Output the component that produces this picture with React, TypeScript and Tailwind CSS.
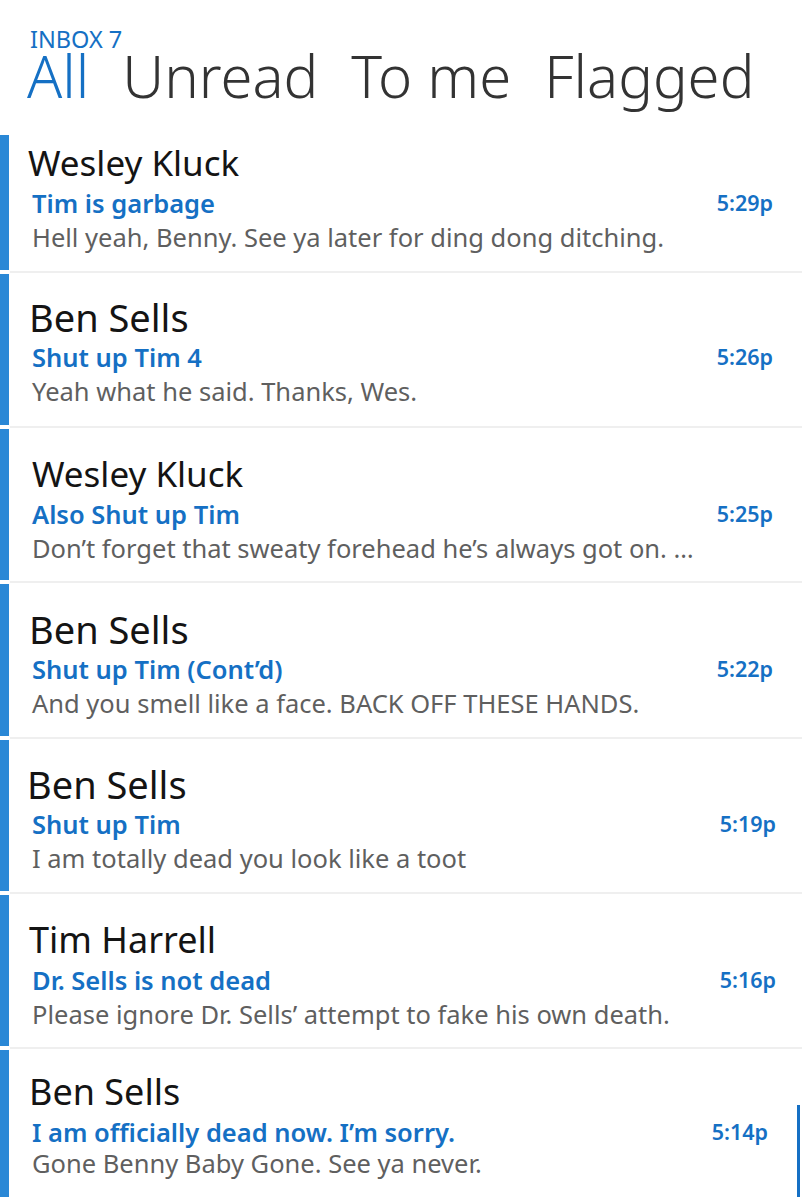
import React from "react";

type Mail = {
  name: string;
  subject: string;
  preview: string;
  time: string;
  h: string;
  pt: string;
  ns: string;
  pr: string;
  pm: string;
};

const mails: Mail[] = [
  { name: "Wesley Kluck", subject: "Tim is garbage", preview: "Hell yeah, Benny. See ya later for ding dong ditching.", time: "5:29p", h: "h-[135px]", pt: "pt-[8px]", ns: "text-[35px] -ml-[4px]", pr: "pr-[29px]", pm: "mt-0" },
  { name: "Ben Sells", subject: "Shut up Tim 4", preview: "Yeah what he said. Thanks, Wes.", time: "5:26p", h: "h-[151px]", pt: "pt-[23px]", ns: "text-[38px] -ml-[3px]", pr: "pr-[29px]", pm: "mt-0" },
  { name: "Wesley Kluck", subject: "Also Shut up Tim", preview: "Don\u2019t forget that sweaty forehead he\u2019s always got on. \u2026", time: "5:25p", h: "h-[151px]", pt: "pt-[25px]", ns: "text-[35px] ml-0", pr: "pr-[29px]", pm: "mt-0" },
  { name: "Ben Sells", subject: "Shut up Tim (Cont\u2019d)", preview: "And you smell like a face. BACK OFF THESE HANDS.", time: "5:22p", h: "h-[152px]", pt: "pt-[25px]", ns: "text-[38px] -ml-[3px]", pr: "pr-[29px]", pm: "mt-0" },
  { name: "Ben Sells", subject: "Shut up Tim", preview: "I am totally dead you look like a toot", time: "5:19p", h: "h-[151px]", pt: "pt-[24px]", ns: "text-[38px] -ml-[5px]", pr: "pr-[26px]", pm: "mt-0" },
  { name: "Tim Harrell", subject: "Dr. Sells is not dead", preview: "Please ignore Dr. Sells\u2019 attempt to fake his own death.", time: "5:16p", h: "h-[151px]", pt: "pt-[25px]", ns: "text-[36px] -ml-[3px]", pr: "pr-[26px]", pm: "mt-0" },
  { name: "Ben Sells", subject: "I am officially dead now. I\u2019m sorry.", preview: "Gone Benny Baby Gone. See ya never.", time: "5:14p", h: "h-[147px]", pt: "pt-[22px]", ns: "text-[36px] -ml-[3px]", pr: "pr-[34px]", pm: "-mt-[3px]" },
];

function Row({ m, last }: { m: Mail; last: boolean }) {
  return (
    <div className={`relative flex ${m.h}`}>
      <div className="w-[9px] shrink-0 bg-[#2a88d6]" />
      <div className={`flex-1 pl-[23px] ${m.pr} ${m.pt}`}>
        <div className={`leading-[40px] text-[#141414] whitespace-nowrap ${m.ns}`}>{m.name}</div>
        <div className="mt-[3px] flex items-center justify-between">
          <div className="text-[25.5px] leading-[34px] font-semibold text-[#1570c4] whitespace-nowrap">{m.subject}</div>
          <div className="text-[21.5px] leading-[34px] font-semibold text-[#1570c4]">{m.time}</div>
        </div>
        <div className={`text-[25.5px] leading-[34px] text-[#5f5f5f] whitespace-nowrap ${m.pm}`}>{m.preview}</div>
      </div>
      {last && <div className="absolute right-[2px] top-[55px] bottom-0 w-[3px] bg-[#1570c4]" />}
    </div>
  );
}

export default function App() {
  return (
    <div className="w-[802px] h-[1200px] overflow-hidden bg-white" style={{ fontFamily: '"Noto Sans", "Open Sans", sans-serif' }}>
      <div className="h-[135px] pl-[30px] pt-[27px]">
        <div className="text-[23.5px] leading-[24px] text-[#1570c4]">INBOX 7</div>
        <div className="-mt-[3px] -ml-[3px] flex gap-[33px] text-[58px] leading-[56px] font-light text-[#333333]">
          <span className="text-[#1570c4]">All</span>
          <span>Unread</span>
          <span>To me</span>
          <span>Flagged</span>
        </div>
      </div>
      {mails.map((m, i) => (
        <React.Fragment key={i}>
          <Row m={m} last={i === mails.length - 1} />
          {i < mails.length - 1 && (
            <div className="flex h-[4px]">
              <div className="w-[10px] bg-white" />
              <div className="flex-1 flex items-center">
                <div className="h-[2px] w-full bg-[#efefef]" />
              </div>
            </div>
          )}
        </React.Fragment>
      ))}
    </div>
  );
}
